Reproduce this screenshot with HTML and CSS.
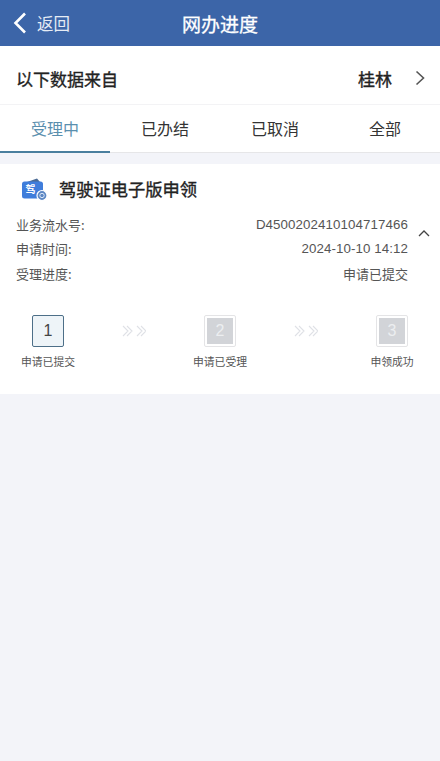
FILE: index.html
```html
<!DOCTYPE html>
<html lang="zh-CN">
<head>
<meta charset="utf-8">
<title>网办进度</title>
<link rel="stylesheet" href="styles.css">
</head>
<body>
<header class="topbar">
  <div class="back">
    <svg class="back-icon" width="16" height="22" viewBox="0 0 16 22"><path d="M13 1.5 L3.5 11 L13 20.5" fill="none" stroke="#fff" stroke-width="2.6"/></svg>
    <span>返回</span>
  </div>
  <h1 class="page-title">网办进度</h1>
</header>
<section class="source">
  <span class="source-label">以下数据来自</span>
  <span class="source-city">桂林</span>
  <svg class="source-arrow" width="12" height="16" viewBox="0 0 12 16"><path d="M2.5 1.5 L9.5 8 L2.5 14.5" fill="none" stroke="#555" stroke-width="1.6"/></svg>
</section>
<nav class="tabs">
  <div class="tab tab-active">受理中</div>
  <div class="tab">已办结</div>
  <div class="tab">已取消</div>
  <div class="tab">全部</div>
</nav>
<main class="card">
  <div class="card-head">
    <svg class="card-icon" width="28" height="26" viewBox="0 0 28 26">
      <path d="M7 6 L17 2.5 L20 6 Z" fill="#4a6a94"/>
      <rect x="2" y="5.5" width="21" height="17" rx="2.5" fill="#3f7ddb"/>
      <circle cx="22" cy="19.5" r="5" fill="#5c87c4" stroke="#fff" stroke-width="1.2"/>
      <circle cx="22" cy="19.5" r="2.2" fill="none" stroke="#dce8f7" stroke-width="1"/>
      <text x="5.5" y="17" class="card-icon-text">驾</text>
    </svg>
    <h2 class="card-title">驾驶证电子版申领</h2>
  </div>
  <div class="details">
    <div class="rows">
      <div class="row"><span>业务流水号:</span><span class="num">D4500202410104717466</span></div>
      <div class="row"><span>申请时间:</span><span class="num">2024-10-10 14:12</span></div>
      <div class="row"><span>受理进度:</span><span>申请已提交</span></div>
    </div>
    <svg class="collapse" width="12" height="8" viewBox="0 0 12 8"><path d="M1 7 L6 2 L11 7" fill="none" stroke="#444" stroke-width="1.3"/></svg>
  </div>
  <div class="steps">
    <div class="step">
      <div class="step-box step-box-on"><span>1</span></div>
      <div class="step-label">申请已提交</div>
    </div>
    <svg class="step-arrows" width="24" height="12" viewBox="0 0 24 12"><path d="M1 1 L6 6 L1 11 M5 1 L10 6 L5 11 M15 1 L20 6 L15 11 M19 1 L24 6 L19 11" fill="none" stroke="#dfe1e6" stroke-width="1.1"/></svg>
    <div class="step">
      <div class="step-box"><span>2</span></div>
      <div class="step-label">申请已受理</div>
    </div>
    <svg class="step-arrows" width="24" height="12" viewBox="0 0 24 12"><path d="M1 1 L6 6 L1 11 M5 1 L10 6 L5 11 M15 1 L20 6 L15 11 M19 1 L24 6 L19 11" fill="none" stroke="#dfe1e6" stroke-width="1.1"/></svg>
    <div class="step">
      <div class="step-box"><span>3</span></div>
      <div class="step-label">申领成功</div>
    </div>
  </div>
</main>
</body>
</html>
```
FILE: styles.css
```css
* { box-sizing: border-box; }
html, body { margin: 0; padding: 0; }
body {
  width: 440px;
  height: 761px;
  overflow: hidden;
  background: #f3f4f9;
  font-family: "Noto Sans CJK SC", "Liberation Sans", sans-serif;
  color: #222;
}
.topbar {
  height: 46px;
  background: #3c65a8;
  color: #fff;
  display: flex;
  align-items: center;
  justify-content: center;
  position: relative;
}
.back {
  position: absolute;
  left: 12px;
  top: 0;
  height: 46px;
  display: flex;
  align-items: center;
  gap: 9px;
  font-size: 16.5px;
  color: #e6ecf5;
}
.back-icon { display: block; }
.page-title {
  margin: 0;
  font-size: 19px;
  font-weight: 400;
  -webkit-text-stroke: 0.3px #fff;
}
.source {
  height: 59px;
  background: #fff;
  border-bottom: 1px solid #f3f3f5;
  display: flex;
  align-items: center;
  padding: 6px 14px 0 16px;
  font-size: 17px;
  font-weight: 400;
  -webkit-text-stroke: 0.35px #222;
}
.source-label { flex: 1; }
.source-city { margin-right: 22px; }
.source-arrow { display: block; }
.tabs {
  height: 48px;
  background: #fff;
  border-bottom: 1px solid #e6e6e8;
  display: flex;
}
.tab {
  width: 110px;
  display: flex;
  align-items: center;
  justify-content: center;
  font-size: 16px;
  color: #333;
  padding-bottom: 1px;
}
.tab-active {
  color: #5b8fae;
  border-bottom: 2px solid #4a7f9e;
  height: 48px;
}
.card {
  margin-top: 11px;
  height: 230px;
  background: #fff;
}
.card-head {
  height: 49px;
  display: flex;
  align-items: center;
  padding-left: 20px;
}
.card-icon { display: block; margin-right: 11px; }
.card-icon-text { font-size: 10px; fill: #fff; font-weight: 700; }
.card-title {
  margin: 0;
  font-size: 17.25px;
  font-weight: 400;
  color: #222;
  -webkit-text-stroke: 0.35px #222;
}
.details {
  display: flex;
  padding: 0 10px 0 16px;
}
.rows { flex: 1; margin-top: -1px; }
.row {
  height: 24.5px;
  display: flex;
  align-items: center;
  justify-content: space-between;
  font-size: 13px;
  color: #555;
}
.num {
  font-family: "Liberation Sans", sans-serif;
  font-size: 13.3px;
  letter-spacing: 0.1px;
}
.collapse {
  display: block;
  margin: 16px 0 0 10px;
  flex: none;
}
.steps {
  margin-top: 29px;
  padding: 0 20px;
  display: flex;
  justify-content: space-between;
  align-items: flex-start;
}
.step {
  width: 56px;
  display: flex;
  flex-direction: column;
  align-items: center;
}
.step-box {
  width: 32px;
  height: 32px;
  padding: 2px;
  border: 1px solid #e4e4e6;
  background: #fff;
  border-radius: 2px;
}
.step-box span {
  display: flex;
  width: 100%;
  height: 100%;
  align-items: center;
  justify-content: center;
  background: #d2d4d8;
  color: #eceef0;
  font-size: 16px;
  font-family: "Liberation Sans", sans-serif;
}
.step-box-on {
  padding: 0;
  border-color: #4d6f88;
  background: #eef4f8;
}
.step-box-on span {
  background: transparent;
  color: #444;
  font-size: 16px;
}
.step-label {
  margin-top: 6px;
  font-size: 10.8px;
  line-height: 16px;
  color: #555;
  white-space: nowrap;
}
.step-arrows { display: block; margin-top: 10px; }
```
